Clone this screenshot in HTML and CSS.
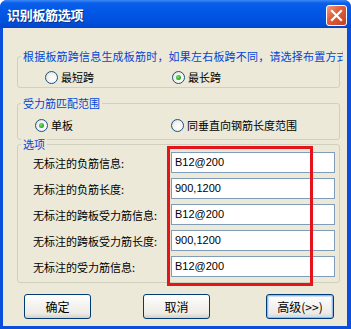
FILE: index.html
```html
<!DOCTYPE html>
<html lang="zh-CN">
<head>
    <meta charset="UTF-8">
    <title>识别板筋选项</title>
    <link rel="stylesheet" href="styles.css">
</head>
<body>
    <div class="dialog">
        <div class="titlebar">
            <span class="title">识别板筋选项</span>
            <span class="close">
                <svg width="13" height="13" viewBox="0 0 13 13">
                    <path d="M2 2 L11 11 M11 2 L2 11" stroke="#fff" stroke-width="2.2" stroke-linecap="square"/>
                </svg>
            </span>
        </div>

        <div class="client">
            <fieldset class="group group-span">
                <legend class="legend-wide">根据板筋跨信息生成板筋时，如果左右板跨不同，请选择布置方式</legend>
                <div class="radio-row row-span">
                    <label class="radio item-span"><span class="dot"></span>最短跨</label>
                    <label class="radio checked"><span class="dot"></span>最长跨</label>
                </div>
            </fieldset>

            <fieldset class="group group-range">
                <legend>受力筋匹配范围</legend>
                <div class="radio-row row-range">
                    <label class="radio item-range checked"><span class="dot"></span>单板</label>
                    <label class="radio"><span class="dot"></span>同垂直向钢筋长度范围</label>
                </div>
            </fieldset>

            <fieldset class="group group-options">
                <legend>选项</legend>
                <div class="field-row"><span class="field-label">无标注的负筋信息:</span><span class="field">B12@200</span></div>
                <div class="field-row"><span class="field-label">无标注的负筋长度:</span><span class="field">900,1200</span></div>
                <div class="field-row"><span class="field-label">无标注的跨板受力筋信息:</span><span class="field">B12@200</span></div>
                <div class="field-row"><span class="field-label">无标注的跨板受力筋长度:</span><span class="field">900,1200</span></div>
                <div class="field-row"><span class="field-label">无标注的受力筋信息:</span><span class="field">B12@200</span></div>
            </fieldset>

            <div class="buttons">
                <button class="btn btn-ok">确定</button>
                <button class="btn btn-cancel">取消</button>
                <button class="btn btn-more">高级(&gt;&gt;)</button>
            </div>

            <!-- red annotation frame drawn over the inputs -->
            <div class="highlight"></div>
        </div>
    </div>
</body>
</html>
```

FILE: styles.css
```css
body {
    margin: 0;
    background: #fff;
    font-family: "Noto Sans CJK SC", "Liberation Sans", sans-serif;
    font-size: 11px;
}
.dialog {
    width: 351px;
    height: 329px;
    background: #0a4fdc;
    border-radius: 7px 7px 0 0;
    overflow: hidden;
}
.titlebar {
    height: 28px;
    display: flex;
    align-items: center;
    justify-content: space-between;
    padding: 0 4px 0 7px;
    background: linear-gradient(#3d8af7 0, #0b5fe9 3px, #0058e6 40%, #0050dc 80%, #0045cc 100%);
}
.title {
    color: #fff;
    font-weight: bold;
    font-size: 13px;
    letter-spacing: -0.3px;
    text-shadow: 1px 1px 0 #0a2f8a;
}
.close {
    width: 19px;
    height: 19px;
    margin-top: 2px;
    border: 1px solid #fff;
    border-radius: 3px;
    background: linear-gradient(135deg, #f29c80 0, #e0603e 40%, #c7401f 100%);
    display: flex;
    align-items: center;
    justify-content: center;
}
.client {
    position: relative;
    height: 298px;
    margin: 0 4px 0 3px;
    background: #ece9d8;
    overflow: hidden;
}
.group {
    margin: 0 7px 0 14px;
    padding: 0 4px 0 3px;
    border: 1px solid #d0d0bf;
    border-radius: 3px;
    min-width: 0;
}
.group legend {
    padding: 0 2px;
    height: 14px;
    line-height: 14px;
    color: #0046d5;
    background: #ece9d8;
}
.legend-wide {
    width: 318px;
    white-space: nowrap;
    overflow: hidden;
    letter-spacing: 0.2px;
}
.group-span {
    margin-top: 21px;
    padding-bottom: 2px;
}
.group-range {
    margin-top: 8px;
    padding-bottom: 6px;
}
.group-options {
    margin-top: -3px;
    padding-bottom: 5px;
}
.radio-row {
    display: flex;
    height: 16px;
    line-height: 16px;
}
.row-span {
    margin-top: 6px;
    padding-left: 24px;
}
.row-range {
    margin-top: 7px;
    padding-left: 14px;
}
.item-span {
    width: 127px;
}
.item-range {
    width: 136px;
}
.radio {
    display: flex;
    align-items: center;
    gap: 3px;
    color: #000;
}
.dot {
    width: 11px;
    height: 11px;
    border: 1px solid #1c5180;
    border-radius: 50%;
    background: radial-gradient(circle at 60% 60%, #fff 0, #f4f3ee 50%, #d6d2c2 100%);
    display: flex;
    align-items: center;
    justify-content: center;
}
.checked .dot::after {
    content: "";
    width: 5px;
    height: 5px;
    border-radius: 50%;
    background: radial-gradient(circle at 40% 40%, #7be17b 0, #21a121 70%);
}
.field-row {
    display: grid;
    grid-template-columns: 138px 164px;
    padding-left: 12px;
    align-items: center;
    height: 21px;
    margin-top: 5px;
}
.field-row:first-of-type {
    margin-top: 1px;
}
.field-label {
    color: #000;
}
.field {
    box-sizing: border-box;
    height: 21px;
    line-height: 19px;
    padding-left: 3px;
    border: 1px solid #7f9db9;
    background: #fff;
    font-family: "Liberation Sans", sans-serif;
    font-size: 11px;
}
.buttons {
    display: flex;
    margin-top: 11px;
    padding-left: 21px;
}
.btn {
    box-sizing: border-box;
    width: 67px;
    height: 25px;
    padding: 0;
    border: 1px solid #003c74;
    border-radius: 3px;
    background: linear-gradient(#fff 0, #f5f4f0 40%, #ecebe5 80%, #d6d0c5 100%);
    font-family: "Noto Sans CJK SC", sans-serif;
    font-size: 12px;
    color: #000;
}
.btn-cancel {
    margin-left: 52px;
}
.btn-more {
    margin-left: 56px;
    width: 68px;
    box-shadow: inset 0 0 0 1px #98b8ea, inset 0 0 0 2px #cee0f8;
}
.highlight {
    position: absolute;
    left: 164px;
    top: 118px;
    width: 140px;
    height: 134px;
    border: 3px solid #e5141c;
}
```
